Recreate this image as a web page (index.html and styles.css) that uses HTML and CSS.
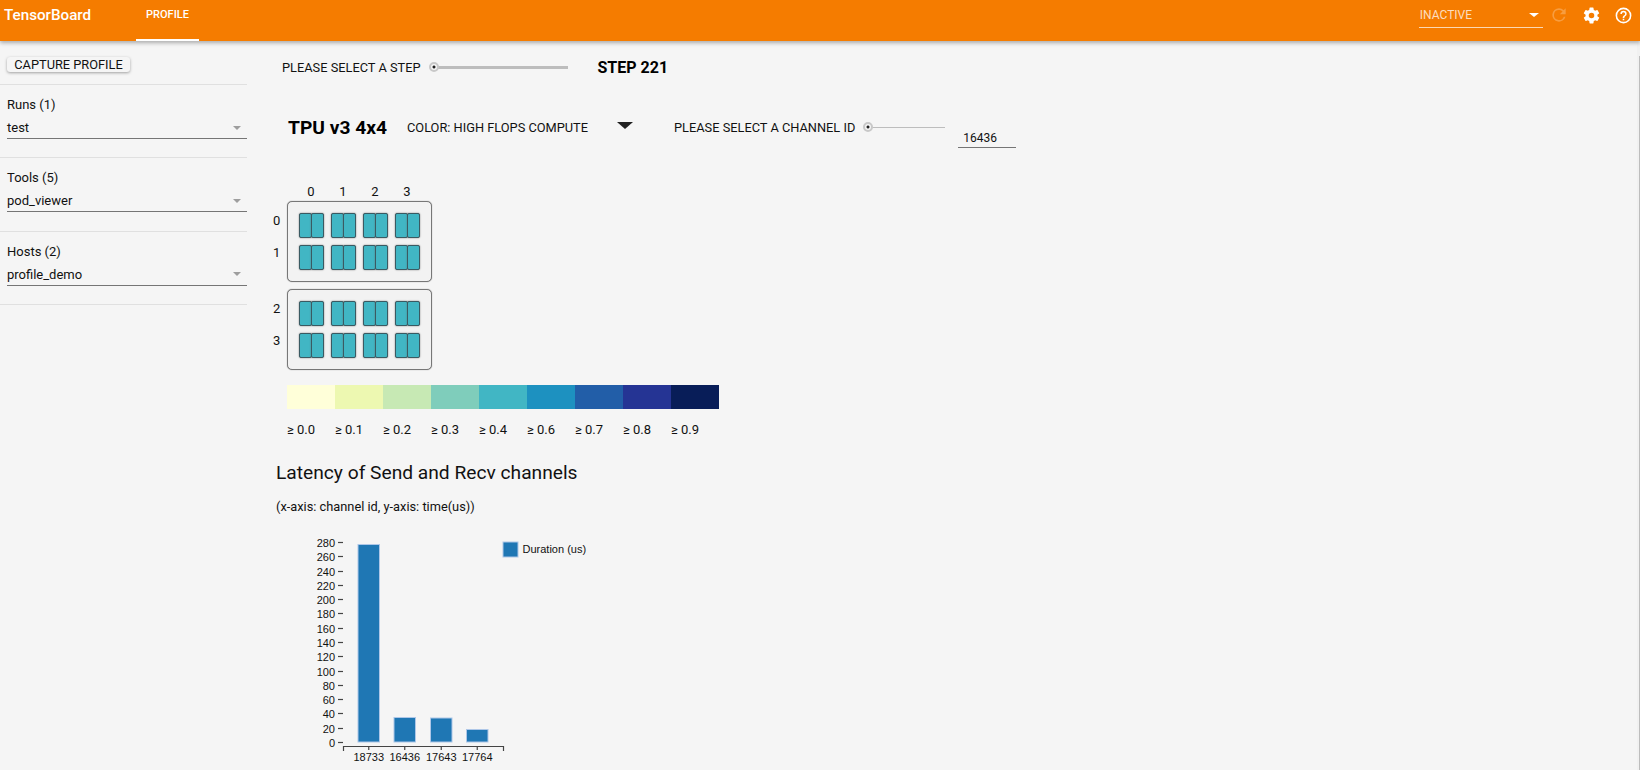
FILE: index.html
```html
<!DOCTYPE html>
<html lang="en">
<head>
    <meta charset="UTF-8">
    <meta name="viewport" content="width=device-width, initial-scale=1.0">
    <title>TensorBoard</title>
    <link rel="stylesheet" href="styles.css">
</head>
<body>
    <header class="toolbar">
        <span class="brand">TensorBoard</span>
        <nav class="tabs"><span class="tab">PROFILE</span></nav>
        <div class="toolbar-right">
            <div class="reload-select">
                <span>INACTIVE</span>
                <span class="caret caret-white"></span>
            </div>
            <span class="icon-btn"><svg class="icon icon-faded" viewBox="0 0 24 24"><path d="M17.65 6.35A7.96 7.96 0 0 0 12 4a8 8 0 1 0 7.73 10h-2.08A6 6 0 1 1 12 6c1.66 0 3.14.69 4.22 1.78L13 11h7V4l-2.35 2.35z"/></svg></span>
            <span class="icon-btn"><svg class="icon" viewBox="0 0 24 24"><path d="M19.43 12.98c.04-.32.07-.64.07-.98s-.03-.66-.07-.98l2.11-1.65a.5.5 0 0 0 .12-.64l-2-3.46a.5.5 0 0 0-.61-.22l-2.49 1a7.3 7.3 0 0 0-1.69-.98l-.38-2.65A.49.49 0 0 0 14 2h-4a.49.49 0 0 0-.49.42l-.38 2.65c-.61.25-1.17.59-1.69.98l-2.49-1a.49.49 0 0 0-.61.22l-2 3.46a.49.49 0 0 0 .12.64l2.11 1.65c-.04.32-.07.65-.07.98s.03.66.07.98l-2.11 1.65a.5.5 0 0 0-.12.64l2 3.46c.12.22.39.3.61.22l2.49-1c.52.4 1.08.73 1.69.98l.38 2.65c.03.24.24.42.49.42h4c.25 0 .46-.18.49-.42l.38-2.65c.61-.25 1.17-.59 1.69-.98l2.49 1c.23.09.49 0 .61-.22l2-3.46a.5.5 0 0 0-.12-.64l-2.11-1.65zM12 15.5a3.5 3.5 0 1 1 0-7 3.5 3.5 0 0 1 0 7z"/></svg></span>
            <span class="icon-btn"><svg class="icon" viewBox="0 0 24 24"><path d="M11 18h2v-2h-2v2zm1-16a10 10 0 1 0 0 20 10 10 0 0 0 0-20zm0 18a8 8 0 1 1 0-16 8 8 0 0 1 0 16zm0-14a4 4 0 0 0-4 4h2a2 2 0 1 1 4 0c0 2-3 1.75-3 5h2c0-2.25 3-2.5 3-5a4 4 0 0 0-4-4z"/></svg></span>
        </div>
    </header>

    <div class="layout">
        <aside class="sidebar">
            <div class="capture-row">
                <button class="capture-btn">CAPTURE PROFILE</button>
            </div>
            <div class="side-section">
                <div class="side-label">Runs (1)</div>
                <div class="side-select"><span>test</span><span class="caret"></span></div>
            </div>
            <div class="side-section">
                <div class="side-label">Tools (5)</div>
                <div class="side-select"><span>pod_viewer</span><span class="caret"></span></div>
            </div>
            <div class="side-section">
                <div class="side-label">Hosts (2)</div>
                <div class="side-select"><span>profile_demo</span><span class="caret"></span></div>
            </div>
        </aside>

        <main class="content">
            <div class="step-row">
                <span class="ctl-label">PLEASE SELECT A STEP</span>
                <div class="slider slider-step"><span class="thumb"></span></div>
                <span class="step-value">STEP 221</span>
            </div>

            <div class="topo-row">
                <span class="topo-name">TPU v3 4x4</span>
                <span class="ctl-label color-label">COLOR: HIGH FLOPS COMPUTE</span>
                <span class="color-arrow"></span>
                <span class="ctl-label channel-label">PLEASE SELECT A CHANNEL ID</span>
                <div class="slider slider-channel"><span class="thumb"></span></div>
                <div class="channel-input">16436</div>
            </div>

            <div class="pod">
                <div class="col-labels"><span>0</span><span>1</span><span>2</span><span>3</span></div>
                <div class="pod-block">
                    <div class="row-labels"><span>0</span><span>1</span></div>
                    <div class="board" id="board0"></div>
                </div>
                <div class="pod-block">
                    <div class="row-labels"><span>2</span><span>3</span></div>
                    <div class="board" id="board1"></div>
                </div>
            </div>

            <div class="legend">
                <div class="legend-item"><span class="swatch s0"></span><span>≥ 0.0</span></div>
                <div class="legend-item"><span class="swatch s1"></span><span>≥ 0.1</span></div>
                <div class="legend-item"><span class="swatch s2"></span><span>≥ 0.2</span></div>
                <div class="legend-item"><span class="swatch s3"></span><span>≥ 0.3</span></div>
                <div class="legend-item"><span class="swatch s4"></span><span>≥ 0.4</span></div>
                <div class="legend-item"><span class="swatch s5"></span><span>≥ 0.6</span></div>
                <div class="legend-item"><span class="swatch s6"></span><span>≥ 0.7</span></div>
                <div class="legend-item"><span class="swatch s7"></span><span>≥ 0.8</span></div>
                <div class="legend-item"><span class="swatch s8"></span><span>≥ 0.9</span></div>
            </div>

            <h2 class="latency-title">Latency of Send and Recv channels</h2>
            <p class="latency-sub">(x-axis: channel id, y-axis: time(us))</p>

            <svg class="chart" id="chart" width="330" height="240" viewBox="300 530 330 240"></svg>
        </main>

        <div class="scroll-edge"><span class="scroll-thumb"></span></div>
    </div>

    <script>
        // 2 boards, each 2 rows of 4 chips
        document.querySelectorAll('.board').forEach(board => {
            for (let i = 0; i < 8; i++) {
                const chip = document.createElement('div');
                chip.className = 'chip';
                chip.innerHTML = '<span class="core"></span><span class="core"></span>';
                board.appendChild(chip);
            }
        });

        // Latency chart
        const chart = document.getElementById('chart');
        let svg = '';
        for (let v = 0; v <= 280; v += 20) {
            const y = Math.round(742 - v * 200 / 280) + 0.5;
            svg += `<line class="axis" x1="338" x2="343" y1="${y}" y2="${y}"/>`;
            svg += `<text x="335" y="${y + 4}" text-anchor="end">${v}</text>`;
        }
        const bars = [[18733, 358, 544.5], [16436, 394, 717.5], [17643, 430.5, 718], [17764, 466.5, 729.5]];
        bars.forEach(b => {
            svg += `<rect class="bar" x="${b[1]}" y="${b[2]}" width="21.5" height="${742 - b[2]}"/>`;
            svg += `<line class="axis" x1="${b[1] + 10.75}" x2="${b[1] + 10.75}" y1="746" y2="750"/>`;
            svg += `<text x="${b[1] + 10.75}" y="761" text-anchor="middle">${b[0]}</text>`;
        });
        svg += '<path class="axis" d="M343.5 751V746.5H503.5V751" fill="none"/>';
        svg += '<rect class="bar" x="503" y="542" width="15" height="15"/>';
        svg += '<text x="522.5" y="553">Duration (us)</text>';
        chart.innerHTML = svg;
    </script>
</body>
</html>
```

FILE: styles.css
```css
* {
    box-sizing: border-box;
}

body {
    margin: 0;
    height: 770px;
    overflow: hidden;
    background-color: #f5f5f5;
    color: #111;
    font-family: Roboto, Arial, sans-serif;
}

.toolbar {
    display: flex;
    align-items: flex-start;
    height: 41px;
    padding-left: 4px;
    background-color: #f57c00;
    color: white;
    box-shadow: 0 2px 4px rgba(0,0,0,0.3);
    position: relative;
}

.brand {
    width: 132px;
    font-size: 15.2px;
    font-weight: 500;
    line-height: 31px;
}

.tab {
    display: block;
    width: 63px;
    height: 41px;
    border-bottom: 2px solid white;
    font-size: 11px;
    font-weight: 500;
    line-height: 30px;
    text-align: center;
}

.toolbar-right {
    display: flex;
    align-items: center;
    margin-left: auto;
    height: 30px;
}

.reload-select {
    display: flex;
    align-items: center;
    justify-content: space-between;
    width: 124px;
    height: 26px;
    padding: 0 4px 0 1px;
    border-bottom: 1px solid rgba(255,255,255,0.7);
    color: rgba(255,255,255,0.75);
    font-size: 12px;
}

.icon-btn {
    display: flex;
    align-items: center;
    justify-content: center;
    width: 32.4px;
    height: 30px;
}

.icon {
    width: 19px;
    height: 19px;
    fill: white;
}

.icon-faded {
    width: 20px;
    height: 20px;
    opacity: 0.25;
}

.caret {
    width: 0;
    height: 0;
    border-left: 4px solid transparent;
    border-right: 4px solid transparent;
    border-top: 4px solid #9e9e9e;
}

.caret-white {
    border-left-width: 5px;
    border-right-width: 5px;
    border-top-color: white;
}

.layout {
    display: flex;
}

.sidebar {
    width: 247px;
    flex-shrink: 0;
}

.capture-row {
    height: 44px;
    padding: 16px 0 0 7px;
    border-bottom: 1px solid #e0e0e0;
}

.capture-btn {
    display: block;
    width: 123px;
    height: 15px;
    padding: 0;
    border: none;
    border-radius: 3px;
    background: #f5f5f5;
    box-shadow: 0 1px 3px rgba(0,0,0,0.35);
    color: #111;
    font-family: inherit;
    font-size: 12.8px;
    line-height: 15px;
}

.side-section {
    height: 73.3px;
    padding: 11px 0 0 7px;
    border-bottom: 1px solid #e0e0e0;
}

.side-label {
    font-size: 13px;
    line-height: 18px;
}

.side-select {
    display: flex;
    align-items: center;
    justify-content: space-between;
    height: 25px;
    padding: 3px 6px 0 0;
    border-bottom: 1px solid #757575;
    font-size: 13px;
}

.content {
    flex: 1;
    padding-left: 29px;
}

.scroll-edge {
    width: 3px;
    height: 729px;
    padding: 15px 0 0 2px;
    background: #f1f1f1;
}

.scroll-thumb {
    display: block;
    width: 1px;
    height: 100%;
    background: #bdbdbd;
}

.step-row {
    display: flex;
    align-items: center;
    height: 52px;
    padding: 0 0 0 6px;
}

.ctl-label {
    font-size: 12.8px;
}

.slider {
    position: relative;
    height: 3px;
    background: #bdbdbd;
}

.slider-step {
    width: 134px;
    margin-left: 14px;
}

.slider-channel {
    width: 77px;
    height: 1px;
    margin-left: 13px;
}

.thumb {
    position: absolute;
    left: -5px;
    top: 50%;
    width: 10px;
    height: 10px;
    margin-top: -5px;
    border: 2px solid #c8c8c8;
    border-radius: 50%;
    background: radial-gradient(#212121 0 1.2px, #f5f5f5 1.8px);
}

.step-value {
    margin-left: 29px;
    color: #000;
    font-size: 16px;
    font-weight: 700;
}

.topo-row {
    display: flex;
    align-items: center;
    height: 60px;
    margin-top: 4px;
    padding-left: 12px;
}

.topo-name {
    width: 119px;
    padding-top: 1px;
    color: #000;
    font-size: 19.2px;
    font-weight: 700;
}

.color-arrow {
    width: 0;
    height: 0;
    margin-left: 29px;
    margin-bottom: 4px;
    border-left: 8px solid transparent;
    border-right: 8px solid transparent;
    border-top: 7px solid #212121;
}

.channel-label {
    margin-left: 41px;
}

.channel-input {
    width: 58px;
    height: 20px;
    margin-left: 13px;
    margin-top: 22px;
    padding: 1px 0 0 5px;
    border-bottom: 1px solid #757575;
    font-size: 12px;
    line-height: 19px;
}

.pod {
    margin-top: 26px;
}

.col-labels {
    display: flex;
    height: 18px;
    padding-left: 19px;
}

.col-labels span {
    width: 32px;
    text-align: center;
    font-size: 13px;
    line-height: 17px;
}

.pod-block {
    display: flex;
    margin-bottom: 6.5px;
}

.row-labels {
    display: flex;
    flex-direction: column;
    gap: 14px;
    width: 14px;
    margin-left: -3px;
    padding-top: 11px;
    font-size: 13px;
    line-height: 18px;
}

.board {
    display: grid;
    grid-template-columns: repeat(4, 25px);
    grid-auto-rows: 25px;
    gap: 7px;
    width: 145px;
    height: 81px;
    padding: 11px;
    border: 1px solid #777;
    border-radius: 5px;
    background: #f2f2f2;
    box-shadow: 0 0 1px #777;
}

.chip {
    display: flex;
}

.core {
    flex: 1;
    border: 1px solid #3a5a62;
    border-radius: 2px;
    background: #41b6c4;
    box-shadow: 0 0 1.5px #666;
}

.core + .core {
    margin-left: -1px;
}

.legend {
    display: flex;
    margin-top: 15px;
    padding-left: 11px;
}

.legend-item {
    display: flex;
    flex-direction: column;
    width: 48px;
    font-size: 13px;
}

.swatch {
    height: 24px;
    margin-bottom: 13px;
}

.s0 { background: #ffffd9; }
.s1 { background: #edf8b1; }
.s2 { background: #c7e9b4; }
.s3 { background: #7fcdbb; }
.s4 { background: #41b6c4; }
.s5 { background: #1d91c0; }
.s6 { background: #225ea8; }
.s7 { background: #253494; }
.s8 { background: #081d58; }

.latency-title {
    margin: 23px 0 0;
    font-size: 19.2px;
    font-weight: 400;
    line-height: 26px;
}

.latency-sub {
    margin: 12px 0 0;
    font-size: 12.8px;
    line-height: 18px;
}

.chart {
    display: block;
    margin: 14px 0 0 24px;
}

.chart text {
    font-family: "Liberation Sans", Arial, sans-serif;
    font-size: 11px;
    fill: #111;
}

.axis {
    stroke: #444;
    stroke-width: 1.2;
}

.bar {
    fill: #1f77b4;
    stroke: #aec7e8;
    stroke-width: 1;
}
```
